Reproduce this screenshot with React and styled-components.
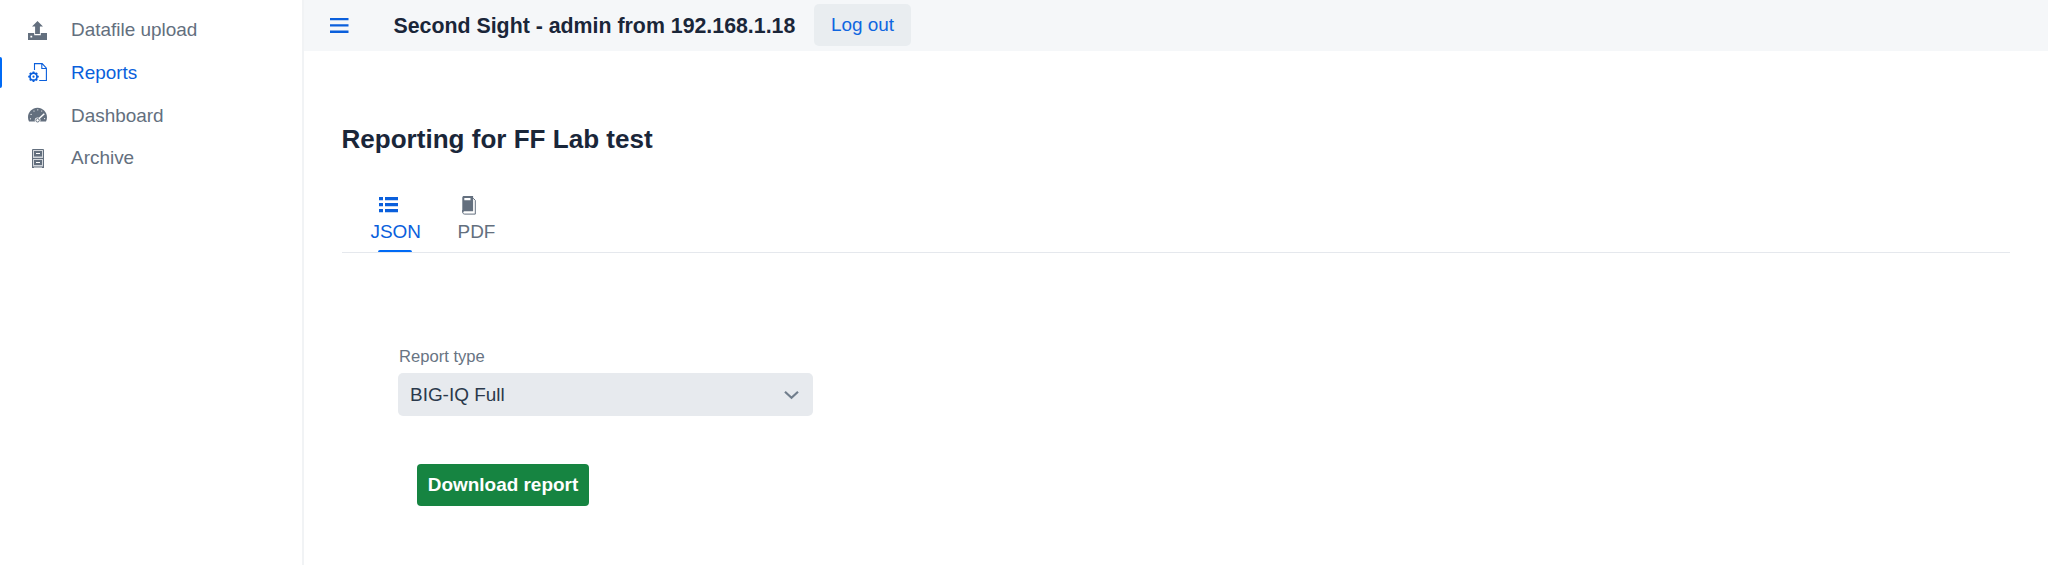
import React from "react";
import styled, { createGlobalStyle } from "styled-components";

const GlobalStyle = createGlobalStyle`
  * { box-sizing: border-box; }
  body {
    margin: 0;
    background: #fff;
    color: #1a2639;
    font-family: "Liberation Sans", Arial, sans-serif;
    font-size: 18.95px;
  }
  button { font: inherit; border: 0; cursor: pointer; }
`;

const Shell = styled.div`
  display: flex;
  height: 565px;
  overflow: hidden;
`;

const Sidebar = styled.nav`
  flex: 0 0 304px;
  border-right: 2px solid #f1f3f5;
  padding-top: 8.7px;
`;

const NavItem = styled.a`
  display: flex;
  align-items: center;
  height: 42.75px;
  color: ${(p) => (p.$active ? "#0a5fdc" : "#636f7e")};
  text-decoration: none;
`;

const Indicator = styled.span`
  width: 2px;
  height: 31px;
  margin-right: 26px;
  border-radius: 0 2px 2px 0;
  background: ${(p) => (p.$active ? "#006af5" : "transparent")};
`;

const NavLabel = styled.span`
  margin-left: 24px;
  line-height: 22px;
`;

const Icon = styled.svg`
  display: block;
  flex: none;
  width: ${(p) => p.$size || 19}px;
  height: ${(p) => p.$size || 19}px;
`;

const Main = styled.div`
  flex: 1;
  min-width: 0;
`;

const Header = styled.header`
  display: flex;
  align-items: center;
  height: 51px;
  padding: 0 0 1px 26px;
  background: #f5f7f9;
`;

const MenuButton = styled.button`
  padding: 0;
  background: none;
  color: #0a5fdc;
`;

const HeaderTitle = styled.h1`
  margin: 0 0 0 44.5px;
  padding-top: 1px;
  width: 402px;
  font-size: 21.33px;
  line-height: 24px;
  white-space: nowrap;
`;

const LogoutButton = styled.button`
  width: 97px;
  height: 42px;
  margin-left: 18.5px;
  padding: 0;
  border-radius: 5px;
  background: #e9edf0;
  color: #0f66e0;
`;

const Content = styled.main`
  padding: 72px 38px 0 37.5px;
`;

const PageTitle = styled.h2`
  margin: 0;
  font-size: 26.05px;
  line-height: 32px;
`;

const Tabs = styled.div`
  display: flex;
  height: 60px;
  margin-top: 38px;
  padding-left: 29px;
  border-bottom: 1px solid #e5e8ed;
`;

const Tab = styled.div`
  display: flex;
  flex-direction: column;
  width: ${(p) => p.$width}px;
  margin-right: 37px;
  color: ${(p) => (p.$active ? "#0a5fdc" : "#636f7e")};
`;

const TabIcon = styled.div`
  height: 27px;
  padding: 3px 0 0 ${(p) => p.$inset}px;
`;

const TabLabel = styled.span`
  line-height: 24px;
  white-space: nowrap;
`;

const TabMark = styled.span`
  width: 34px;
  height: 2px;
  margin: 6px auto 0 7.5px;
  border-radius: 2px 2px 0 0;
  background: #006af5;
`;

const Form = styled.div`
  padding: 94px 0 0 56.5px;
`;

const FieldLabel = styled.label`
  display: block;
  padding-left: 1px;
  font-size: 16.6px;
  line-height: 20px;
  color: #687483;
`;

const SelectBox = styled.div`
  display: flex;
  align-items: center;
  justify-content: space-between;
  width: 415px;
  height: 43px;
  margin-top: 6px;
  padding: 0 14px 0 12px;
  border-radius: 5px;
  background: #e7eaee;
  color: #2b394b;
`;

const DownloadButton = styled.button`
  width: 172px;
  height: 42.5px;
  margin: 47.5px 0 0 19px;
  padding: 0;
  border-radius: 4px;
  background: #168441;
  color: #fff;
  font-weight: bold;
  white-space: nowrap;
`;

const UploadIcon = () => (
  <Icon viewBox="0 0 19 19" fill="currentColor">
    <path d="M0 12h6.2v2.2h6.6V12H19v7H0zM2.4 14.8v1.800h1.800v-1.800z" fillRule="evenodd" />
    <path d="M9.500 0 15 5.600h-3.100v7.400H7.100V5.600H4z" />
  </Icon>
);

const ReportsIcon = () => (
  <Icon viewBox="0 0 19 19" fill="none" stroke="currentColor">
    <path d="M6.5 7V.6h7.7l4.2 4.6v12.3h-7.2M13.8.6v4.9h4.6" strokeWidth="1.1" />
    <circle cx="5.5" cy="13.7" r="3.5" strokeWidth="1.7" />
    <circle cx="5.5" cy="13.7" r="1.1" fill="currentColor" stroke="none" />
    <path
      d="M5.5 8.4v1.8M5.5 17.2V19M.2 13.7H2M9 13.7h1.8M1.8 10l1.3 1.3M7.9 16.1l1.3 1.3M9.2 10l-1.3 1.3M3.1 16.1l-1.3 1.3"
      strokeWidth="1.8"
    />
  </Icon>
);

const DashboardIcon = () => (
  <Icon viewBox="0 0 19 19">
    <path
      fill="currentColor"
      d="M9.5 1.8C4.3 1.8 0 6.1 0 11.3c0 1.6.3 3.1 1 4.3h17c.7-1.2 1-2.7 1-4.3 0-5.2-4.3-9.5-9.5-9.5z"
    />
    <g fill="#fff">
      <circle cx="2.5" cy="12.800" r=".6" />
      <circle cx="3.1" cy="8.400" r=".6" />
      <circle cx="6" cy="5" r=".6" />
      <circle cx="9.8" cy="3.800" r=".6" />
      <circle cx="13.700" cy="5" r=".6" />
      <circle cx="16.600" cy="12.600" r=".6" />
      <circle cx="9.600" cy="14.300" r="2.800" />
    </g>
    <path d="m10.300 13.300 6-5.600" stroke="#fff" strokeWidth="1.500" />
    <circle cx="9.600" cy="14.300" r="1.700" fill="none" stroke="currentColor" strokeWidth="1" />
  </Icon>
);

const ArchiveIcon = () => (
  <Icon viewBox="0 0 19 19" fill="none" stroke="currentColor">
    <path d="M4.500.5h11v17.500h-11zM4.500 9.500h11" fill="#d3d7dc" strokeWidth="1" />
    <path d="M6 2h8v5.500H6zM6 11h8v5H6z" fill="currentColor" stroke="none" />
    <path d="M8 4.500h4M8 13.500h4" stroke="#fff" strokeWidth="1.200" />
    <path d="M4 18h2v1H4zM14 18h2v1h-2z" fill="currentColor" stroke="none" />
  </Icon>
);

const MenuIcon = () => (
  <Icon viewBox="0 0 19 19" fill="currentColor">
    <path d="M0 2h18.5v2.3H0zM0 8.3h18.5v2.3H0zM0 14.6h18.5v2.3H0z" />
  </Icon>
);

const ListIcon = () => (
  <Icon viewBox="0 0 19 19" fill="currentColor">
    <path d="M0 1h4v3.3H0zM6 1h13v3.3H6zM0 7h4v3.3H0zM6 7h13v3.3H6zM0 13h4v3.3H0zM6 13h13v3.3H6z" />
  </Icon>
);

const BookIcon = () => (
  <Icon viewBox="0 0 19 19">
    <path d="M3.7 14v2.1c0 1.3.8 2 2 2h10.6V4.3l-2.2-2.1" fill="none" stroke="currentColor" strokeWidth="1" />
    <path
      fill="currentColor"
      fillRule="evenodd"
      d="M5 0h9.1v15.3H5.3c-.6 0-.9.4-1 .9h-1V1.700C3.300.7 4 0 5 0zm.3 2.1v2.2h6.200V2.100z"
    />
  </Icon>
);

const Chevron = () => (
  <Icon $size={15} viewBox="0 0 15 15" fill="none" stroke="#717e8c" strokeWidth="2.2">
    <path d="m1 4.7 6.5 6 6.5-6" />
  </Icon>
);

const navItems = [
  { label: "Datafile upload", Glyph: UploadIcon },
  { label: "Reports", Glyph: ReportsIcon, active: true },
  { label: "Dashboard", Glyph: DashboardIcon },
  { label: "Archive", Glyph: ArchiveIcon },
];

export default function App() {
  return (
    <>
      <GlobalStyle />
      <Shell>
        <Sidebar>
          {navItems.map(({ label, Glyph, active }) => (
            <NavItem key={label} $active={active}>
              <Indicator $active={active} />
              <Glyph />
              <NavLabel>{label}</NavLabel>
            </NavItem>
          ))}
        </Sidebar>
        <Main>
          <Header>
            <MenuButton aria-label="Toggle menu">
              <MenuIcon />
            </MenuButton>
            <HeaderTitle>Second Sight - admin from 192.168.1.18</HeaderTitle>
            <LogoutButton>Log out</LogoutButton>
          </Header>
          <Content>
            <PageTitle>Reporting for FF Lab test</PageTitle>
            <Tabs>
              <Tab $active $width={50}>
                <TabIcon $inset={8.5}>
                  <ListIcon />
                </TabIcon>
                <TabLabel>JSON</TabLabel>
                <TabMark />
              </Tab>
              <Tab $width={38}>
                <TabIcon $inset={1}>
                  <BookIcon />
                </TabIcon>
                <TabLabel>PDF</TabLabel>
              </Tab>
            </Tabs>
            <Form>
              <FieldLabel>Report type</FieldLabel>
              <SelectBox>
                BIG-IQ Full
                <Chevron />
              </SelectBox>
              <DownloadButton>Download report</DownloadButton>
            </Form>
          </Content>
        </Main>
      </Shell>
    </>
  );
}
